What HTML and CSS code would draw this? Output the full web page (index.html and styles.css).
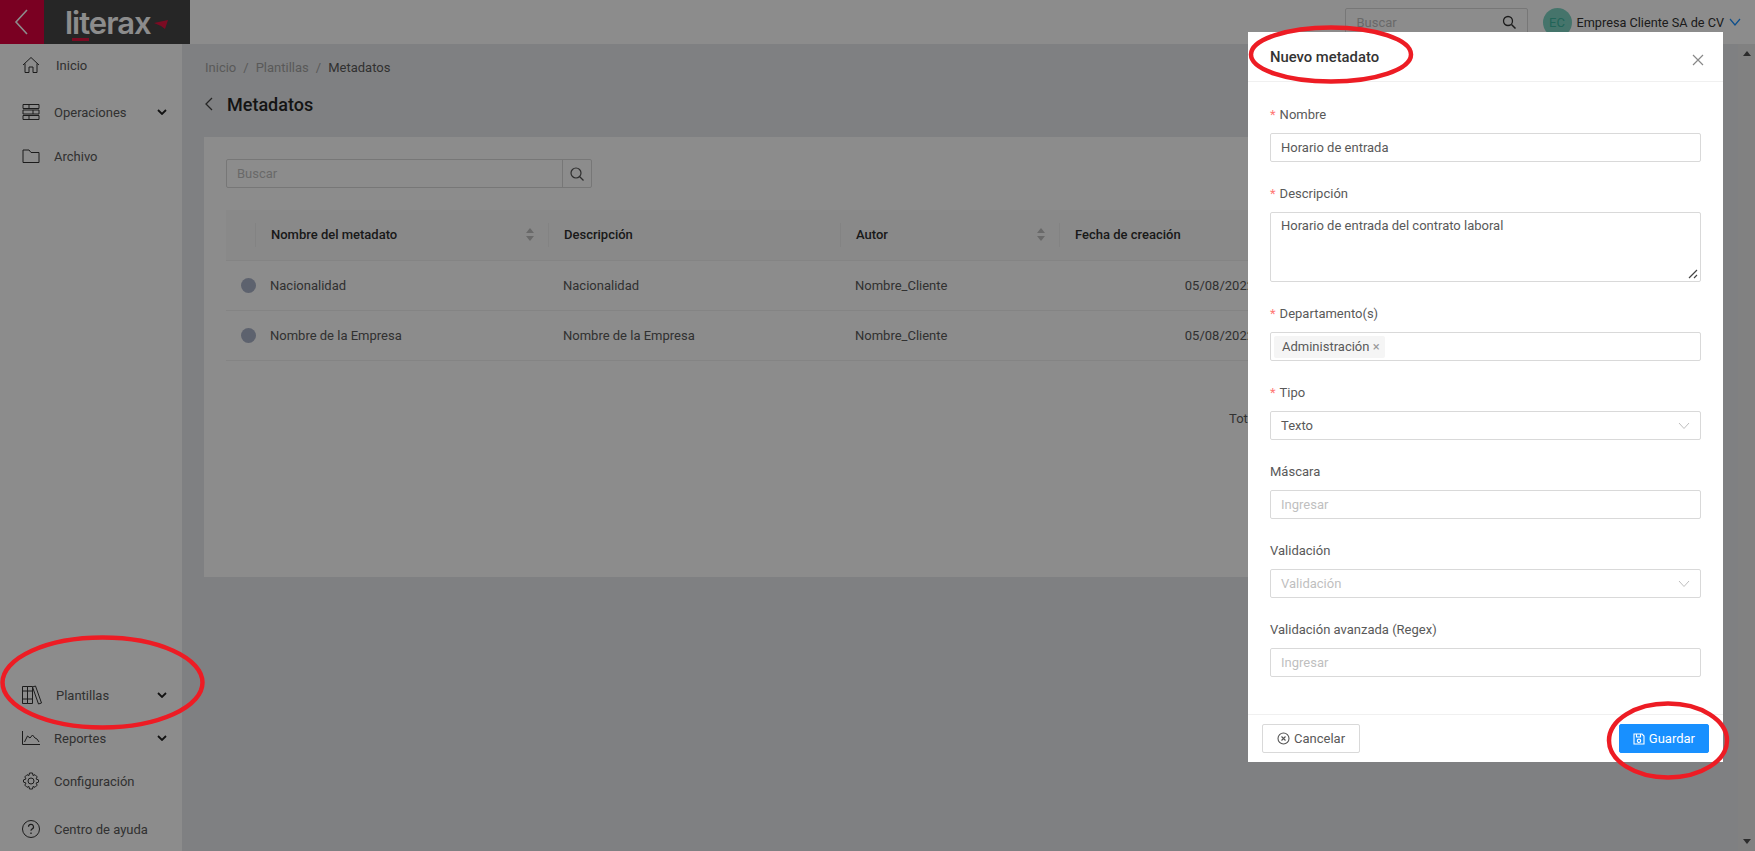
FILE: index.html
```html
<!DOCTYPE html>
<html lang="es">
<head>
    <meta charset="UTF-8">
    <title>Metadatos</title>
    <link rel="stylesheet" href="styles.css">
</head>
<body>

    <header class="topbar">
        <div class="brand">
            <div class="brand-back">
                <svg width="16" height="30" viewBox="0 0 16 30"><path d="M13 3 2 15l11 12" fill="none" stroke="#fff" stroke-width="1.6"/></svg>
            </div>
            <div class="brand-logo">
                <span class="logo-text">literax</span>
                <svg class="logo-plane" width="14" height="10" viewBox="0 0 14 10"><path d="M0 3 14 0l-3 9-4-3z" fill="#e01440"/></svg>
            </div>
        </div>
        <div class="top-right">
            <div class="top-search">
                <span class="top-search-text">Buscar</span>
                <svg width="14" height="14" viewBox="0 0 14 14"><circle cx="6" cy="6" r="4.5" fill="none" stroke="#333" stroke-width="1.3"/><path d="m9.5 9.5 4 4" stroke="#333" stroke-width="1.5"/></svg>
            </div>
            <div class="avatar">EC</div>
            <span class="company">Empresa Cliente SA de CV</span>
            <svg width="12" height="8" viewBox="0 0 12 8"><path d="m1 1 5 6 5-6" fill="none" stroke="#1890ff" stroke-width="1.2"/></svg>
        </div>
    </header>

    <div class="layout">
        <nav class="sidebar">
            <div class="nav-group">
                <a class="nav-item nav-inicio">
                    <svg width="20" height="20" viewBox="0 0 20 20" fill="none" stroke="#333" stroke-width="1"><path d="M2 10 10 2.500l8 7.500M4 8.500V17.500h4V12h4v5.500h4V8.500"/></svg>
                    <span class="nav-label nav-label-wide">Inicio</span>
                </a>
                <a class="nav-item nav-ops">
                    <svg width="20" height="18" viewBox="0 0 20 18" fill="none" stroke="#333" stroke-width="1"><path d="M2 1.500h16v4H2zM2 7h16v4H2zM2 12.500h16v4H2zM8 1.500v4M12 7v4M8 12.500v4"/></svg>
                    <span class="nav-label">Operaciones</span>
                    <svg class="nav-caret" width="10" height="6" viewBox="0 0 10 6"><path d="m1 1 4 4 4-4" fill="none" stroke="#222" stroke-width="1.800"/></svg>
                </a>
                <a class="nav-item nav-archivo">
                    <svg width="20" height="16" viewBox="0 0 20 16" fill="none" stroke="#333" stroke-width="1"><path d="M2 2h6l2 2.500h8V14.500H2z"/></svg>
                    <span class="nav-label">Archivo</span>
                </a>
            </div>
            <div class="nav-group">
                <a class="nav-item nav-plantillas">
                    <svg width="22" height="20" viewBox="0 0 22 20" fill="none" stroke="#333" stroke-width="1"><path d="M1.500 1.500h5V18.500h-5zM6.500 1.500h5V18.500h-5zM1.500 6h10M1.500 14h10M11.500 2l3-1 6 17-3 1z"/></svg>
                    <span class="nav-label">Plantillas</span>
                    <svg class="nav-caret" width="10" height="6" viewBox="0 0 10 6"><path d="m1 1 4 4 4-4" fill="none" stroke="#222" stroke-width="1.800"/></svg>
                </a>
                <a class="nav-item nav-reportes">
                    <svg width="20" height="16" viewBox="0 0 20 16" fill="none" stroke="#333" stroke-width="1"><path d="M1.500 1v13.500H19M3.500 12l3-6 2.500 2 2.500-3 2.500 3 2 1 2 3"/></svg>
                    <span class="nav-label">Reportes</span>
                    <svg class="nav-caret" width="10" height="6" viewBox="0 0 10 6"><path d="m1 1 4 4 4-4" fill="none" stroke="#222" stroke-width="1.800"/></svg>
                </a>
                <a class="nav-item nav-config">
                    <svg width="20" height="20" viewBox="0 0 20 20" fill="none" stroke="#333" stroke-width="1"><circle cx="10" cy="10" r="3"/><path d="M8.500 2h3l.5 2.500 2-.8 2.200 2.200-1.200 2 2.500 1v2.200l-2.500 1 1.200 2-2.200 2.200-2-.8-.5 2.500h-3l-.5-2.500-2 .8-2.200-2.200 1.200-2-2.500-1V8.900l2.500-1-1.200-2L6 3.700l2 .8z"/></svg>
                    <span class="nav-label">Configuración</span>
                </a>
                <a class="nav-item nav-ayuda">
                    <svg width="20" height="20" viewBox="0 0 20 20" fill="none" stroke="#333" stroke-width="1"><circle cx="10" cy="10" r="8.500"/><path d="M7.500 7.800a2.500 2.500 0 1 1 3.500 2.300c-.7.4-1 .8-1 1.700" stroke-width="1.200"/><path d="M10 13.500v1.500" stroke-width="1.300"/></svg>
                    <span class="nav-label">Centro de ayuda</span>
                </a>
            </div>
        </nav>

        <main class="content">
            <div class="breadcrumb">
                <span class="crumb">Inicio</span><span class="crumb-sep">/</span>
                <span class="crumb">Plantillas</span><span class="crumb-sep">/</span>
                <span class="crumb-current">Metadatos</span>
            </div>
            <div class="page-title">
                <svg width="10" height="16" viewBox="0 0 10 16"><path d="M8 2 2 8l6 6" fill="none" stroke="#444" stroke-width="1.300"/></svg>
                <h1>Metadatos</h1>
            </div>

            <section class="card">
                <div class="search">
                    <span class="search-input">Buscar</span>
                    <span class="search-btn">
                        <svg width="16" height="16" viewBox="0 0 16 16"><circle cx="7" cy="7" r="5" fill="none" stroke="#555" stroke-width="1.200"/><path d="m10.500 10.500 4 4" stroke="#555" stroke-width="1.300"/></svg>
                    </span>
                </div>

                <table class="grid">
                    <thead>
                        <tr>
                            <th class="col-dot"></th>
                            <th class="col-name"><div class="th-in">Nombre del metadato<span class="sorter"></span></div></th>
                            <th class="col-desc"><div class="th-in">Descripción</div></th>
                            <th class="col-author"><div class="th-in">Autor<span class="sorter"></span></div></th>
                            <th class="col-date"><div class="th-in">Fecha de creación</div></th>
                        </tr>
                    </thead>
                    <tbody>
                        <tr>
                            <td><span class="dot"></span></td>
                            <td>Nacionalidad</td>
                            <td>Nacionalidad</td>
                            <td>Nombre_Cliente</td>
                            <td class="date">05/08/2022</td>
                        </tr>
                        <tr>
                            <td><span class="dot"></span></td>
                            <td>Nombre de la Empresa</td>
                            <td>Nombre de la Empresa</td>
                            <td>Nombre_Cliente</td>
                            <td class="date">05/08/2022</td>
                        </tr>
                    </tbody>
                </table>
                <div class="pager">Total 2</div>
            </section>
        </main>

        <div class="scrollbar">
            <span class="scroll-up"></span>
            <span class="scroll-down"></span>
        </div>
    </div>

    <div class="mask"></div>

    <aside class="modal">
        <div class="modal-head">
            <h2>Nuevo metadato</h2>
            <svg class="modal-close" width="14" height="14" viewBox="0 0 14 14"><path d="m2 2 10 10M12 2 2 12" stroke="#888" stroke-width="1.200"/></svg>
        </div>
        <form class="modal-body">
            <div class="field">
                <label class="req">Nombre</label>
                <div class="control">Horario de entrada</div>
            </div>
            <div class="field">
                <label class="req">Descripción</label>
                <div class="control control-area">
                    Horario de entrada del contrato laboral
                    <svg class="resize" width="10" height="10" viewBox="0 0 10 10"><path d="m1 9 8-8M6 9l3-3" stroke="#444" stroke-width="1.200"/></svg>
                </div>
            </div>
            <div class="field">
                <label class="req">Departamento(s)</label>
                <div class="control control-tags">
                    <span class="tag">Administración <span class="tag-x">×</span></span>
                </div>
            </div>
            <div class="field">
                <label class="req">Tipo</label>
                <div class="control control-select">Texto
                    <svg width="12" height="8" viewBox="0 0 12 8"><path d="m1 1 5 5.500L11 1" fill="none" stroke="#bfbfbf" stroke-width="1"/></svg>
                </div>
            </div>
            <div class="field">
                <label>Máscara</label>
                <div class="control placeholder">Ingresar</div>
            </div>
            <div class="field">
                <label>Validación</label>
                <div class="control control-select placeholder">Validación
                    <svg width="12" height="8" viewBox="0 0 12 8"><path d="m1 1 5 5.500L11 1" fill="none" stroke="#bfbfbf" stroke-width="1"/></svg>
                </div>
            </div>
            <div class="field">
                <label>Validación avanzada (Regex)</label>
                <div class="control placeholder">Ingresar</div>
            </div>
        </form>
        <div class="modal-foot">
            <button class="btn" type="button">
                <svg width="13" height="13" viewBox="0 0 13 13" fill="none" stroke="#555" stroke-width="1.100"><circle cx="6.500" cy="6.500" r="5.500"/><path d="m4.500 4.500 4 4M8.500 4.500l-4 4"/></svg>
                Cancelar
            </button>
            <button class="btn btn-primary" type="button">
                <svg width="12" height="12" viewBox="0 0 12 12" fill="none" stroke="#fff" stroke-width="1.100"><path d="M1 1h8l2 2v8H1zM3.500 1v3h4V1"/><circle cx="6" cy="7.800" r="1.700"/></svg>
                Guardar
            </button>
        </div>
    </aside>

    <!-- red marks drawn over the screenshot -->
    <svg class="marks" width="1755" height="851" viewBox="0 0 1755 851" fill="none" stroke="#ed1c24" stroke-width="4.500">
        <ellipse cx="102.500" cy="682.500" rx="100" ry="45"/>
        <ellipse cx="1331" cy="54.500" rx="80" ry="27"/>
        <ellipse cx="1668" cy="740.500" rx="59" ry="37"/>
    </svg>

</body>
</html>
```

FILE: styles.css
```css
* { box-sizing: border-box; }
html, body { margin: 0; height: 100%; overflow: hidden; }
body { font-family: Roboto, "Liberation Sans", sans-serif; font-size: 13px; color: #595959; background: #e8eaed; }

.topbar { display: flex; height: 44px; background: #fff; justify-content: space-between; }
.brand { display: flex; width: 190px; background: #454545; }
.brand-back { width: 44px; background: #de003e; display: flex; align-items: center; justify-content: center; }
.brand-logo { display: flex; align-items: center; padding-left: 21px; }
.logo-text { position: relative; font-family: Inter, sans-serif; font-size: 31px; font-weight: 600; letter-spacing: -1px; color: #fff; }
.logo-text::after { content: ""; position: absolute; left: 7px; top: 34px; width: 17px; height: 3px; background: #e01440; }
.logo-plane { margin: 6px 0 0 3px; }

.top-right { display: flex; align-items: center; padding-right: 14px; }
.top-search { width: 183px; height: 29px; border: 1px solid #d9d9d9; border-radius: 2px; display: flex; align-items: center; justify-content: space-between; padding: 0 11px; margin-right: 15px; }
.top-search-text { color: #bfbfbf; font-size: 13px; }
.avatar { width: 29px; height: 29px; border-radius: 50%; background: #7fd4c4; color: #3cb6a0; display: flex; align-items: center; justify-content: center; font-size: 13px; margin-right: 5px; }
.company { font-size: 12.7px; color: #333; margin-right: 5px; }

.layout { display: flex; height: 807px; }
.sidebar { width: 182px; background: #fff; display: flex; flex-direction: column; justify-content: space-between; }
.nav-group { display: flex; flex-direction: column; }
.nav-item { display: flex; align-items: center; height: 44px; padding-left: 21px; color: #595959; font-size: 13px; }
.nav-label { margin-left: 13px; flex: 1; }
.nav-label-wide { margin-left: 15px; }
.nav-caret { margin-right: 15px; }
.nav-inicio { margin-top: -1px; }
.nav-ops { margin-top: 3px; }
.nav-reportes { margin-top: -1px; }
.nav-config { margin-top: -1px; }
.nav-ayuda { margin-top: 4px; }

.content { flex: 1; padding: 0 39px 0 22px; }
.breadcrumb { height: 46px; padding: 16px 0 0 1px; display: flex; align-items: flex-start; color: #a3a3a3; }
.crumb-sep { margin: 0 7px; }
.crumb-current { color: #595959; }
.page-title { display: flex; align-items: center; height: 28px; gap: 13px; margin-bottom: 19px; }
.page-title h1 { margin: 0; font-size: 18px; font-weight: 500; color: #262626; }

.card { background: #fff; height: 440px; padding: 22px 0 0 22px; }
.search { display: flex; width: 366px; height: 29px; border: 1px solid #d9d9d9; border-radius: 2px; margin-bottom: 22px; }
.search-input { flex: 1; color: #bfbfbf; padding: 6px 10px; }
.search-btn { width: 29px; border-left: 1px solid #d9d9d9; display: flex; align-items: center; justify-content: center; }

.grid { border-collapse: collapse; table-layout: fixed; width: 1280px; }
.grid th { background: #fafafa; height: 50px; padding: 0; font-weight: 500; color: #303030; text-align: left; border-bottom: 1px solid #f0f0f0; }
.grid td { height: 50px; padding: 0 15px; border-bottom: 1px solid #f0f0f0; }
.col-dot { width: 29px; }
.col-name { width: 293px; }
.col-desc { width: 292px; }
.col-author { width: 219px; }
.th-in { display: flex; align-items: center; justify-content: space-between; height: 24px; padding: 0 14px 0 15px; border-left: 1px solid #eee; }
.sorter { position: relative; width: 8px; height: 13px; }
.sorter::before, .sorter::after { content: ""; position: absolute; left: 0; border: 4px solid transparent; }
.sorter::before { top: 0; border-top: 0; border-bottom: 5px solid #bfbfbf; }
.sorter::after { bottom: 0; border-bottom: 0; border-top: 5px solid #bfbfbf; }
.grid td:first-child { padding: 0 0 0 15px; }
.dot { display: block; width: 15px; height: 15px; border-radius: 50%; background: #aab2c8; }
.date { text-align: right; padding-right: 252px !important; }
.pager { padding: 50px 0 0 1003px; }

.scrollbar { position: absolute; top: 44px; right: 0; width: 17px; height: 807px; background: #ececec; display: flex; flex-direction: column; justify-content: space-between; align-items: center; padding: 7px 0; }
.scroll-up { border: 4px solid transparent; border-top: 0; border-bottom: 5px solid #505050; }
.scroll-down { border: 4px solid transparent; border-bottom: 0; border-top: 5px solid #505050; }

.mask { position: fixed; inset: 0; background: rgba(0, 0, 0, .45); }

.modal { position: fixed; left: 1248px; top: 32px; width: 475px; height: 730px; background: #fff; display: flex; flex-direction: column; }
.modal-head { display: flex; align-items: center; justify-content: space-between; height: 50px; padding: 0 18px 0 22px; border-bottom: 1px solid #f0f0f0; }
.modal-head h2 { margin: 0; font-size: 14.8px; font-weight: 500; color: #333; }
.modal-close { margin-top: 6px; }
.modal-body { flex: 1; padding: 22px 22px 0; }
.field { margin-bottom: 21px; }
.field label { display: block; height: 20px; line-height: 21px; margin-bottom: 9px; color: #595959; }
.req::before { content: "*"; color: #ff7875; margin-right: 4px; }
.control { height: 29px; border: 1px solid #d9d9d9; border-radius: 2px; padding: 0 10px; display: flex; align-items: center; color: #595959; }
.control-area { height: 70px; padding-top: 5px; align-items: flex-start; position: relative; }
.resize { position: absolute; right: 2px; bottom: 2px; }
.control-tags { padding: 0 3px; }
.tag { background: #f5f5f5; height: 22px; line-height: 22px; padding: 0 5px 0 8px; border-radius: 2px; }
.tag-x { color: #999; }
.control-select { justify-content: space-between; }
.placeholder { color: #bfbfbf; }
.modal-foot { display: flex; justify-content: space-between; align-items: center; height: 48px; padding: 0 14px; border-top: 1px solid #f0f0f0; }
.btn { display: flex; align-items: center; gap: 4px; height: 29px; padding: 0 14px; background: #fff; border: 1px solid #d9d9d9; border-radius: 2px; font: 13px Roboto, sans-serif; color: #595959; }
.btn-primary { background: #1890ff; border-color: #1890ff; color: #fff; padding: 0 13px; }

.marks { position: fixed; left: 0; top: 0; pointer-events: none; }
```
